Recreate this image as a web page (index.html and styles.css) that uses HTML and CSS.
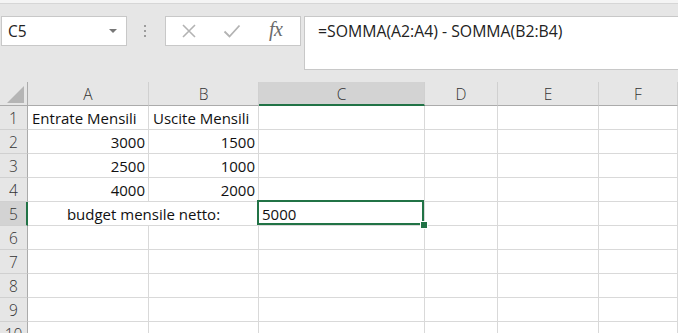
FILE: index.html
```html
<!DOCTYPE html>
<html lang="it">
<head>
<meta charset="utf-8">
<title>Excel</title>
<link rel="stylesheet" href="styles.css">
</head>
<body>
<div class="topstrip"></div>
<div class="bar">
  <div class="namebox"><span class="ref">C5</span><span class="arrow"></span></div>
  <div class="dots"><i></i><i></i><i></i></div>
  <div class="btns">
    <svg class="ic" width="16" height="16" viewBox="0 0 16 16"><path d="M2 2 L14 14 M14 2 L2 14" stroke="#b3b3b3" stroke-width="1.6" fill="none"/></svg>
    <svg class="ic" width="18" height="16" viewBox="0 0 18 16"><path d="M1.5 8.5 L6.5 13.5 L16.5 2.5" stroke="#b3b3b3" stroke-width="1.8" fill="none"/></svg>
    <span class="fx">fx</span>
  </div>
  <div class="formula">=SOMMA(A2:A4) - SOMMA(B2:B4)</div>
</div>
<div class="sheet">
  <div class="corner"><span class="tri"></span></div>
  <div class="ch">A</div>
  <div class="ch">B</div>
  <div class="ch sel">C</div>
  <div class="ch">D</div>
  <div class="ch">E</div>
  <div class="ch">F</div>

  <div class="rh">1</div>
  <div class="c l">Entrate Mensili</div>
  <div class="c l">Uscite Mensili</div>
  <div class="c"></div><div class="c"></div><div class="c"></div><div class="c"></div>

  <div class="rh">2</div>
  <div class="c r">3000</div>
  <div class="c r">1500</div>
  <div class="c"></div><div class="c"></div><div class="c"></div><div class="c"></div>

  <div class="rh">3</div>
  <div class="c r">2500</div>
  <div class="c r">1000</div>
  <div class="c"></div><div class="c"></div><div class="c"></div><div class="c"></div>

  <div class="rh">4</div>
  <div class="c r">4000</div>
  <div class="c r">2000</div>
  <div class="c"></div><div class="c"></div><div class="c"></div><div class="c"></div>

  <div class="rh sel">5</div>
  <div class="c ctr span2">budget mensile netto:</div>
  <div class="c l active">5000</div>
  <div class="c"></div><div class="c"></div><div class="c"></div>

  <div class="rh">6</div>
  <div class="c"></div><div class="c"></div><div class="c"></div><div class="c"></div><div class="c"></div><div class="c"></div>
  <div class="rh">7</div>
  <div class="c"></div><div class="c"></div><div class="c"></div><div class="c"></div><div class="c"></div><div class="c"></div>
  <div class="rh">8</div>
  <div class="c"></div><div class="c"></div><div class="c"></div><div class="c"></div><div class="c"></div><div class="c"></div>
  <div class="rh">9</div>
  <div class="c"></div><div class="c"></div><div class="c"></div><div class="c"></div><div class="c"></div><div class="c"></div>
  <div class="rh">10</div>
  <div class="c"></div><div class="c"></div><div class="c"></div><div class="c"></div><div class="c"></div><div class="c"></div>
</div>
</body>
</html>
```

FILE: styles.css
```css
* { box-sizing: border-box; }
html, body {
  margin: 0;
  padding: 0;
}
body {
  width: 678px;
  height: 333px;
  overflow: hidden;
  background: #e6e6e6;
  font-family: "Open Sans", "Noto Sans", sans-serif;
  color: #1f1f1f;
}
.topstrip {
  height: 4px;
  background: #f4f4f4;
  border-bottom: 1px solid #d6d6d6;
}
.bar {
  display: flex;
  align-items: flex-start;
  padding-top: 12px;
  height: 78px;
}
.namebox {
  margin-left: 1px;
  width: 126px;
  height: 30px;
  background: #fff;
  border: 1px solid #c8c8c8;
  display: flex;
  align-items: center;
  justify-content: space-between;
  padding: 0 9px 0 6px;
  font-size: 15.5px;
  color: #222;
}
.arrow {
  width: 0;
  height: 0;
  border-left: 4px solid transparent;
  border-right: 4px solid transparent;
  border-top: 4px solid #777;
}
.dots {
  width: 38px;
  height: 30px;
  display: flex;
  flex-direction: column;
  align-items: center;
  justify-content: center;
  gap: 3px;
  padding-right: 2px;
}
.dots i {
  display: block;
  width: 2px;
  height: 2px;
  background: #9c9c9c;
}
.btns {
  width: 136px;
  height: 30px;
  background: #fff;
  border: 1px solid #c8c8c8;
  display: flex;
  align-items: center;
  padding-left: 15px;
  gap: 26px;
}
.fx {
  font-family: "Liberation Serif", "DejaVu Serif", serif;
  font-style: italic;
  font-size: 20px;
  color: #6b6b6b;
  margin-left: 2px;
  margin-top: -3px;
  letter-spacing: -0.5px;
}
.formula {
  margin-left: 3px;
  flex: 1;
  height: 54px;
  background: #fff;
  border: 1px solid #c8c8c8;
  border-right: none;
  padding: 3px 0 0 13px;
  font-size: 15.8px;
  color: #222;
}
.sheet {
  display: grid;
  grid-template-columns: 28px 121px 110px 166px 73px 101px 79px;
  grid-template-rows: 24px;
  grid-auto-rows: 24px;
  background: #fff;
}
.corner {
  background: #e6e6e6;
  border-right: 1px solid #ababab;
  border-bottom: 1px solid #ababab;
  position: relative;
}
.tri {
  position: absolute;
  right: 3px;
  bottom: 2px;
  width: 0;
  height: 0;
  border-left: 17px solid transparent;
  border-bottom: 17px solid #b5b5b5;
}
.ch {
  background: #e6e6e6;
  border-right: 1px solid #d0d0d0;
  border-bottom: 1px solid #ababab;
  display: flex;
  align-items: center;
  justify-content: center;
  font-size: 15.5px;
  font-weight: 300;
  color: #333;
}
.ch.sel {
  background: #d3d3d3;
  border-bottom: 2px solid #217346;
  padding-top: 1px;
}
.rh {
  background: #e6e6e6;
  border-right: 1px solid #ababab;
  border-bottom: 1px solid #d0d0d0;
  display: flex;
  align-items: center;
  justify-content: center;
  font-size: 15.5px;
  font-weight: 300;
  color: #333;
}
.rh.sel {
  background: #d3d3d3;
  border-right: 2px solid #217346;
  padding-left: 1px;
}
.c {
  border-right: 1px solid #d9d9d9;
  border-bottom: 1px solid #d9d9d9;
  display: flex;
  align-items: center;
  font-size: 15px;
  color: #111;
  padding: 0 3px 0 4px;
  white-space: nowrap;
}
.c.r { justify-content: flex-end; }
.c.l { justify-content: flex-start; }
.c.ctr { justify-content: center; }
.span2 { grid-column: span 2; }
.active {
  position: relative;
  padding-left: 3px;
}
.active::after {
  content: "";
  position: absolute;
  top: -2px;
  left: -2px;
  right: 0;
  bottom: 0;
  border: 2px solid #217346;
}
.active::before {
  content: "";
  position: absolute;
  right: -3px;
  bottom: -3px;
  width: 6px;
  height: 6px;
  background: #217346;
  border: 1px solid #fff;
  z-index: 2;
  box-sizing: content-box;
  margin: -1px;
}
```
